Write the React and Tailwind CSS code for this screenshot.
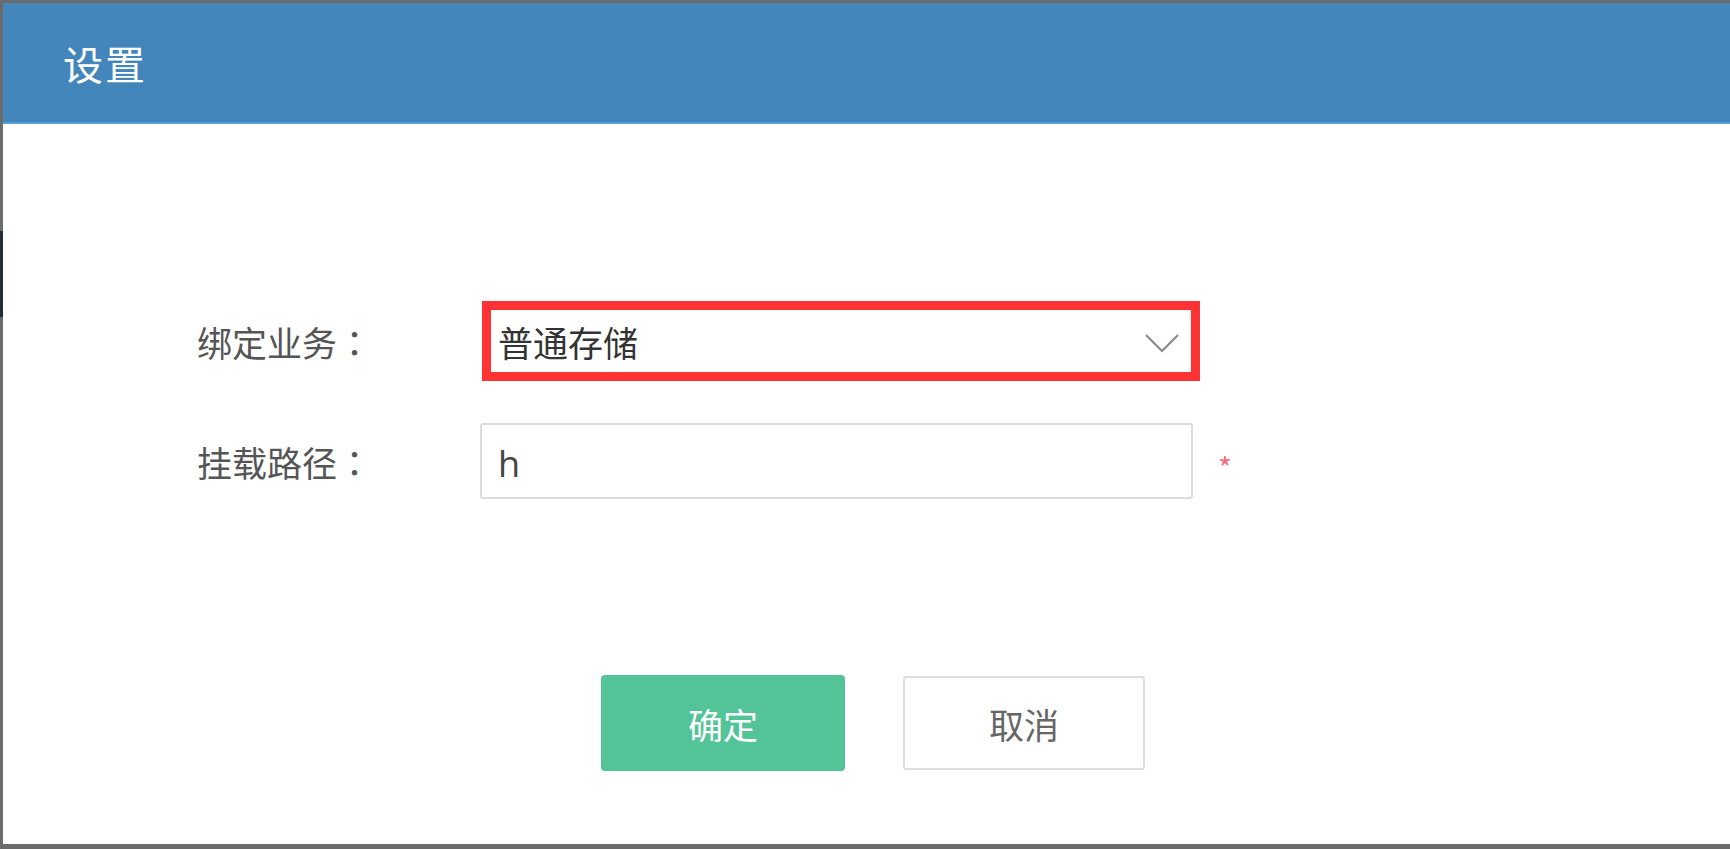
export default function App() {
  const font = { fontFamily: '"Noto Sans CJK SC", "Noto Sans", sans-serif' };
  const colon = { fontFamily: '"Noto Sans CJK JP", "Noto Sans CJK SC", sans-serif' };
  return (
    <div className="w-[1730px] h-[849px] bg-[#6b6b6b] flex flex-col overflow-hidden" style={font}>
      <div className="flex flex-1 pt-[3px] pb-[5px]">
        <div className="w-[3px] flex flex-col">
          <div className="h-[228px] bg-[#6b6b6b]"></div>
          <div className="h-[86px] bg-[#252b38]"></div>
          <div className="flex-1 bg-[#6b6b6b]"></div>
        </div>
        <div className="flex-1 flex flex-col bg-white">
          <div className="h-[121px] bg-[#4386bc] border-b-2 border-[#5b9bd0] flex items-center pl-[60px]">
            <span className="text-white text-[40px] leading-none tracking-[2px]">设置</span>
          </div>
          <div className="flex flex-col pt-[177px]">
            <div className="flex items-center">
              <div className="w-[479px] pl-[194px] text-[35px] text-[#555] leading-none">
                绑定业务<span style={colon}>：</span>
              </div>
              <div className="w-[718px] h-[80px] border-[9px] border-[#ff3333] bg-white flex items-center justify-between pl-[7px] pr-[12px]">
                <span className="text-[35px] text-[#333] leading-none">普通存储</span>
                <svg width="34" height="20" viewBox="0 0 34 20" fill="none" className="mt-[4px]">
                  <polyline points="1,2 17,18 33,2" stroke="#8a8a8a" strokeWidth="2.2" />
                </svg>
              </div>
            </div>
            <div className="flex items-center mt-[42px]">
              <div className="w-[477px] pl-[194px] text-[35px] text-[#555] leading-none">
                挂载路径<span style={colon}>：</span>
              </div>
              <div className="w-[713px] h-[76px] border-2 border-[#dcdcdc] rounded-[3px] flex items-center pl-[16px]">
                <span className="text-[36px] text-[#444] leading-none mt-[6px]" style={{ fontFamily: '"Open Sans", "Noto Sans", sans-serif' }}>h</span>
              </div>
              <span className="ml-[25px] text-[30px] text-[#f46f7f] leading-none mt-[12px]">*</span>
            </div>
            <div className="flex items-start mt-[176px] pl-[598px] gap-[58px]">
              <div className="w-[244px] h-[96px] bg-[#52c497] rounded-[4px] flex items-center justify-center text-white text-[35px] pt-[2px]">确定</div>
              <div className="w-[242px] h-[94px] mt-[1px] border-2 border-[#dedede] rounded-[3px] bg-white flex items-center justify-center text-[#666] text-[35px] pt-[2px]">取消</div>
            </div>
          </div>
        </div>
      </div>
    </div>
  );
}
